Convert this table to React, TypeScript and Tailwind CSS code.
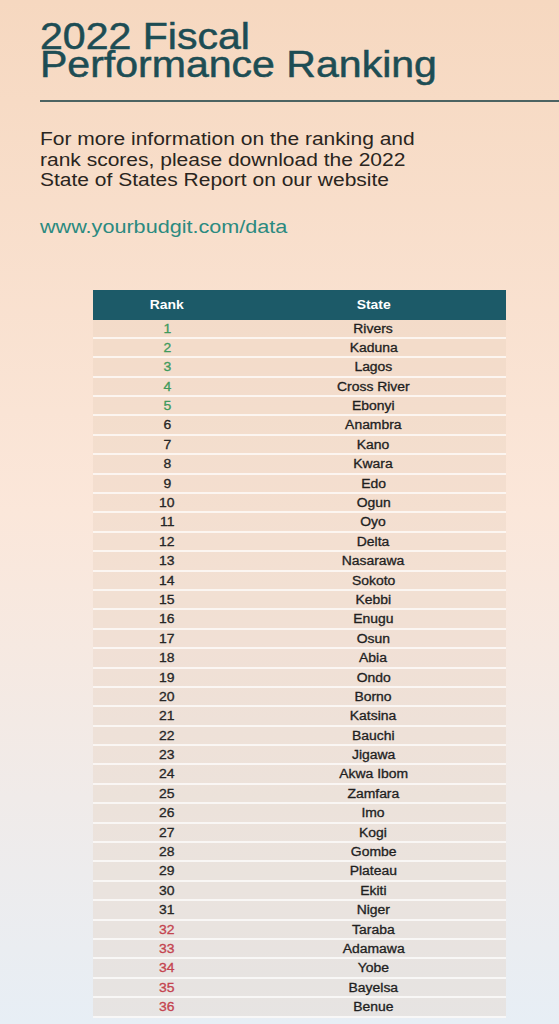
const STATES = [
  "Rivers", "Kaduna", "Lagos", "Cross River", "Ebonyi", "Anambra", "Kano", "Kwara", "Edo",
  "Ogun", "Oyo", "Delta", "Nasarawa", "Sokoto", "Kebbi", "Enugu", "Osun", "Abia", "Ondo",
  "Borno", "Katsina", "Bauchi", "Jigawa", "Akwa Ibom", "Zamfara", "Imo", "Kogi", "Gombe",
  "Plateau", "Ekiti", "Niger", "Taraba", "Adamawa", "Yobe", "Bayelsa", "Benue",
];

function rankColor(rank: number) {
  if (rank <= 5) return "text-[#3f9a5c]";
  if (rank >= 32) return "text-[#c4434f]";
  return "text-[#262626]";
}

// the poster type is set a bit wide, so text gets a horizontal stretch
export default function App() {
  return (
    <div
      className="h-[1024px] w-full overflow-hidden bg-gradient-to-b from-[#f6d8c0] via-[#fbe7da] to-[#e7eef5]"
      style={{ fontFamily: '"Liberation Sans", Arial, sans-serif' }}
    >
      <h1 className="pl-[40px] pt-[23px] text-[36px] leading-[28px] text-[#1d4d54] [-webkit-text-stroke:0.5px_#1d4d54]">
        <div className="origin-left scale-x-[1.14]">2022 Fiscal</div>
        <div className="origin-left scale-x-[1.14]">Performance Ranking</div>
      </h1>
      <div className="ml-[40px] mt-[21px] h-[2px] bg-[#4c6362]" />

      <div className="px-[40px]">
        <div className="mt-[27px] text-[17.5px] leading-[20.5px] text-[#2a2520]">
          <div className="origin-left scale-x-[1.2]">For more information on the ranking and</div>
          <div className="origin-left scale-x-[1.2]">rank scores, please download the 2022</div>
          <div className="origin-left scale-x-[1.2]">State of States Report on our website</div>
        </div>
        <div className="mt-[25px] origin-left scale-x-[1.2] text-[18px] leading-[22px] text-[#2b8a80]">
          www.yourbudgit.com/data
        </div>
      </div>

      <div className="ml-[93px] mt-[52px] w-[413px]">
        <div className="grid h-[30px] grid-cols-[148px_1fr] items-center bg-[#1c5a68] text-[12px] font-bold text-white">
          <div className="text-center">
            <span className="inline-block scale-x-[1.16]">Rank</span>
          </div>
          <div className="text-center">
            <span className="inline-block scale-x-[1.16]">State</span>
          </div>
        </div>
        {STATES.map((state, i) => (
          <div
            key={state}
            className="grid h-[19.4px] grid-cols-[148px_1fr] items-center border-b-2 border-white/70 bg-[#e6cdb9]/30 text-[12px] [-webkit-text-stroke:0.3px_currentColor]"
          >
            <div className={`text-center ${rankColor(i + 1)}`}>
              <span className="inline-block scale-x-[1.16]">{i + 1}</span>
            </div>
            <div className="text-center text-[#1f1f1f]">
              <span className="inline-block scale-x-[1.16]">{state}</span>
            </div>
          </div>
        ))}
      </div>
    </div>
  );
}
